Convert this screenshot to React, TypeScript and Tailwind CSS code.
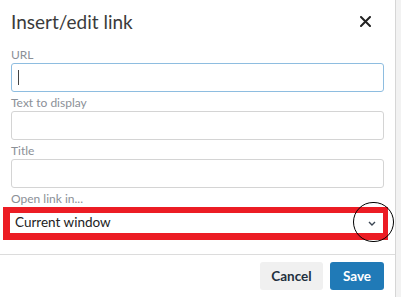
import React from 'react';

const Field = ({ label, focused }: { label: string; focused?: boolean }) => (
    <div className="flex flex-col">
        <label className="h-[16px] text-[12px] leading-[16px] text-[#8b9097]">{label}</label>
        <div
            className={`h-[29px] rounded-[3px] border ${focused ? 'border-[#8ebde0]' : 'border-[#d4d4d4]'} bg-white flex items-center pl-[6px]`}
        >
            {focused && <div className="w-px h-[15px] bg-[#444]"></div>}
        </div>
    </div>
);

export default function App() {
    return (
        <div className="w-[401px] h-[297px] bg-[#f2f2f2] overflow-hidden font-['Lato',sans-serif]">
            <div className="w-[396px] h-full bg-white border-r border-[#d6d6d6] flex flex-col relative">
                {/* Header */}
                <div className="h-[46px] flex items-center justify-between pl-[11px] pr-[24px] shrink-0">
                    <h1 className="text-[19px] text-[#3b3b3b] leading-none -mt-[3px]">Insert/edit link</h1>
                    <svg width="11" height="11" viewBox="0 0 11 11" className="-mt-[3px]">
                        <path d="M1 1 L10 10 M10 1 L1 10" stroke="#222" strokeWidth="2" strokeLinecap="round" />
                    </svg>
                </div>

                {/* Form */}
                <div className="flex flex-col gap-[3px] px-[11px] pt-[1px]">
                    <Field label="URL" focused />
                    <Field label="Text to display" />
                    <Field label="Title" />
                    <label className="h-[16px] text-[12px] leading-[16px] text-[#8b9097]">Open link in...</label>
                </div>

                {/* Select with red highlight */}
                <div className="ml-[3px] w-[385px] h-[33px] border-[#ec1c24] border-t-[6px] border-b-[7px] border-l-[7px] border-r-[5px] bg-white flex items-center justify-between pl-[5px] pr-[7px]">
                    <span className="text-[13.5px] text-[#222] leading-none">Current window</span>
                    <svg width="8" height="5" viewBox="0 0 8 5">
                        <path d="M1 1 L4 4 L7 1" stroke="#3a4552" strokeWidth="1.4" fill="none" />
                    </svg>
                </div>
                <div className="absolute left-[353px] top-[202px] w-[41px] h-[40px] rounded-full border-[1.5px] border-black"></div>

                {/* Footer */}
                <div className="mt-[14px] border-t border-[#dcdcdc] flex justify-end gap-[7px] pt-[7px] pr-[11px]">
                    <button className="w-[63px] h-[28px] rounded-[3px] bg-[#f0f0f0] text-[13.5px] font-bold text-[#222f3e]">Cancel</button>
                    <button className="w-[54px] h-[28px] rounded-[3px] bg-[#207ab7] text-[13.5px] font-bold text-white">Save</button>
                </div>
            </div>
        </div>
    );
}
